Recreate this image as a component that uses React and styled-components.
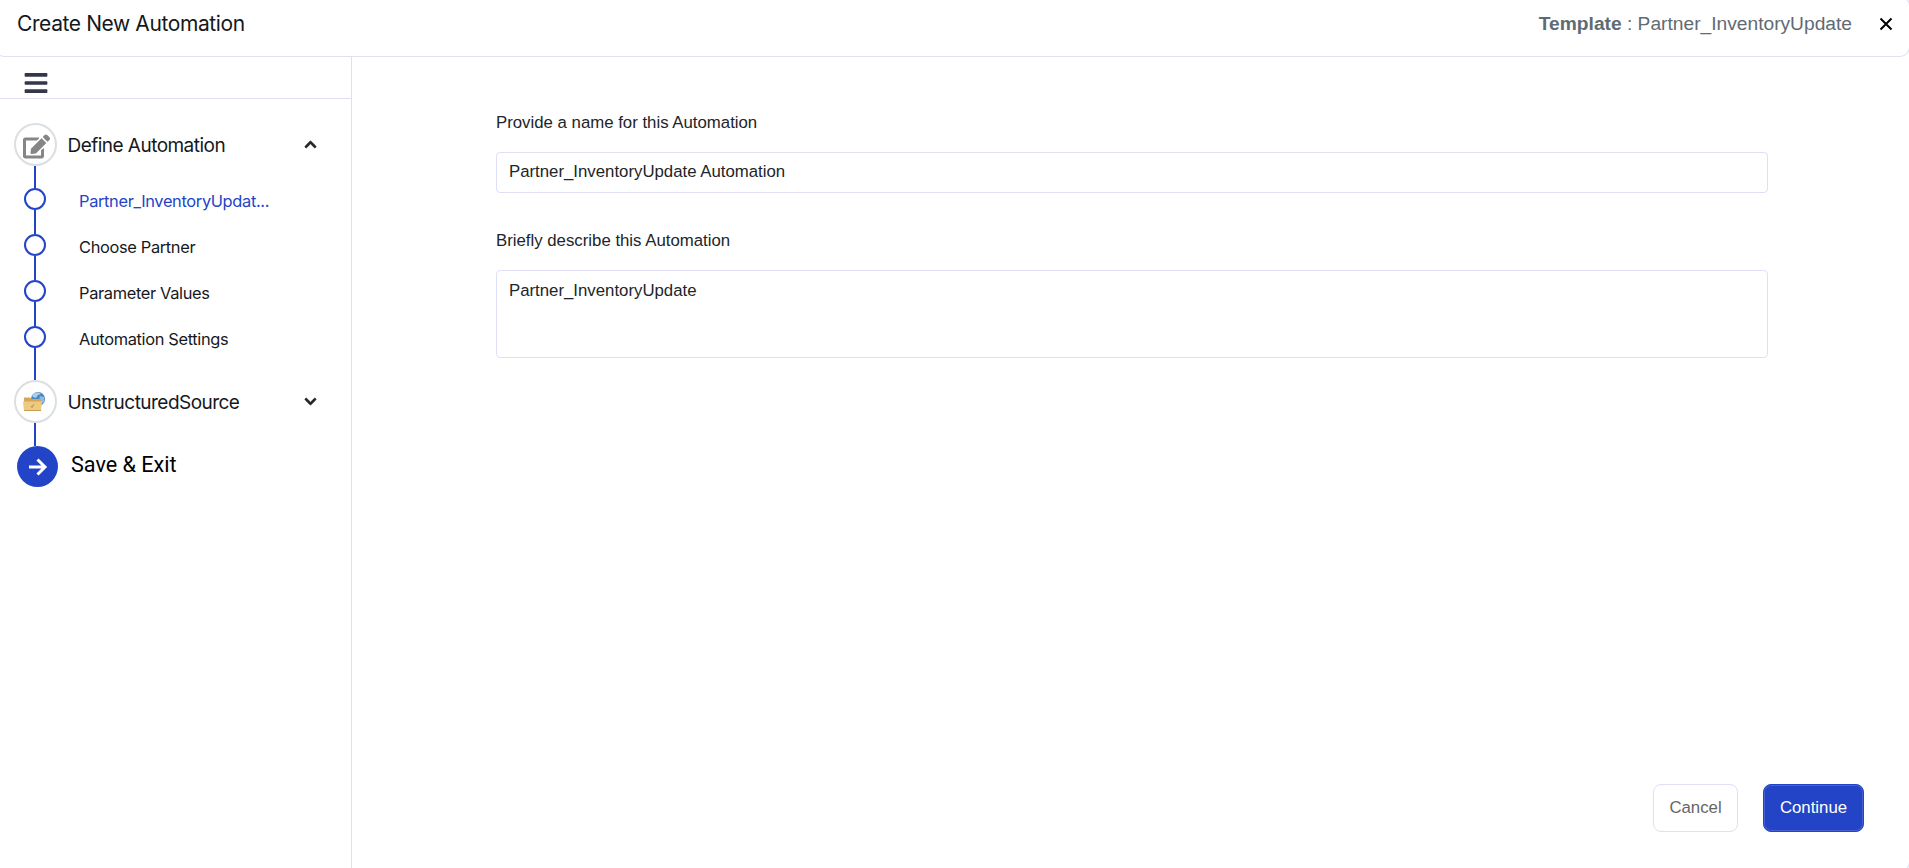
import { useState } from 'react'
import styled, { createGlobalStyle, css } from 'styled-components'
import {
    FaBars,
    FaEdit,
    FaChevronUp,
    FaChevronDown,
} from 'react-icons/fa'

const GlobalStyle = createGlobalStyle`
    *, *::before, *::after {
        box-sizing: border-box;
    }
    body {
        margin: 0;
        background: #fff;
        color: #212529;
        font-family: 'Liberation Sans', Arial, sans-serif;
        font-size: 16.8px;
        overflow: hidden;
    }
`

const Page = styled.div`
    display: flex;
    flex-direction: column;
    height: 868px;
    overflow: hidden;
`

const Header = styled.header`
    display: flex;
    flex: none;
    align-items: center;
    justify-content: space-between;
    height: 61px;
    margin: -4px -1px 0 -5px;
    padding: 4px 15px 9px 22px;
    border: 1px solid #dfdff6;
    border-left: 0;
    border-radius: 10px;
`

const Title = styled.h1`
    margin: 0;
    font-family: Inter, sans-serif;
    font-size: 21px;
    font-weight: 400;
    letter-spacing: -0.4px;
    line-height: 26px;
    color: #16181d;
`

const HeaderRight = styled.div`
    display: flex;
    align-items: center;
    gap: 26px;
`

const TemplateName = styled.div`
    font-size: 19.2px;
    line-height: 24px;
    color: #5f6b73;
`

const CloseButton = styled.button`
    display: flex;
    padding: 0;
    border: 0;
    background: none;
    color: #000;
    cursor: pointer;
`

const Body = styled.div`
    display: flex;
    flex: 1;
    margin: 0 -1px -4px 0;
    border: solid #dfdff6;
    border-width: 0 1px 1px 0;
    border-radius: 0 0 10px 0;
`

const Sidebar = styled.aside`
    width: 352px;
    border-right: 1px solid #dfdff6;
`

const MenuBar = styled.div`
    display: flex;
    height: 42px;
    padding: 12.5px 0 0 22.5px;
    border-bottom: 1px solid #dfdff6;
    color: #35364b;
`

const Steps = styled.div`
    display: flex;
    flex-direction: column;
    padding: 24px 34px 0 14px;
`

const StepHead = styled.div`
    display: flex;
    align-items: center;
    height: 43px;
    cursor: pointer;
`

const StepIcon = styled.span`
    display: flex;
    flex: none;
    align-items: center;
    justify-content: center;
    width: 43px;
    height: 43px;
    padding: ${({ $shift }) => $shift || '0'};
    border: 2px solid #dadfe3;
    border-radius: 50%;
    color: #868686;
`

const StepTitle = styled.span`
    flex: 1;
    margin-left: 10.5px;
    padding-top: 2px;
    font-family: Inter, sans-serif;
    font-size: 19px;
    letter-spacing: -0.53px;
    color: #16181d;
`

const Chevron = styled.span`
    display: flex;
    color: #212529;

    path {
        stroke: currentColor;
        stroke-width: 36px;
    }
`

const Line = styled.span`
    flex: none;
    width: 2px;
    height: ${({ $height }) => $height}px;
    margin-left: 20px;
    background: #2444c8;
`

const SubStep = styled.div`
    display: flex;
    height: 46px;
`

const Track = styled.span`
    display: flex;
    flex-direction: column;
    width: 65px;
`

const Dot = styled.span`
    flex: none;
    width: 22px;
    height: 22px;
    margin-left: 10px;
    border: 2px solid #2444c8;
    border-radius: 50%;
`

const SubTitle = styled.span`
    padding-top: 3px;
    font-family: Inter, sans-serif;
    font-size: 16.4px;
    letter-spacing: -0.34px;
    line-height: 20px;
    color: ${({ $active }) => ($active ? '#2444c8' : '#16181d')};
`

const SaveRow = styled.div`
    display: flex;
    align-items: center;
    padding-left: 3px;
    font-family: Roboto, sans-serif;
    font-size: 21.6px;
    color: #000;
`

const SaveIcon = styled.span`
    display: flex;
    align-items: center;
    justify-content: center;
    width: 41px;
    height: 41px;
    margin-right: 13px;
    border-radius: 50%;
    background: #2444c8;
`

const SaveText = styled.span`
    padding-bottom: 4px;
`

const Content = styled.main`
    display: flex;
    flex: 1;
    flex-direction: column;
    padding: 56px 45px 39px 144px;
`

const Field = styled.label`
    display: flex;
    flex-direction: column;
    margin-right: 96px;
    line-height: 20px;
`

const fieldStyles = css`
    margin: 19px 0 38px;
    border: 1px solid #dfdff6;
    border-radius: 4px;
    outline: none;
    background: #fff;
    color: #212529;
    font-family: inherit;
    font-size: 16.8px;
    line-height: 20px;
    resize: none;
`

const Input = styled.input`
    ${fieldStyles}
    height: 41px;
    padding: 0 12px 2px;
`

const TextArea = styled.textarea`
    ${fieldStyles}
    height: 88px;
    padding: 10px 12px;
`

const Footer = styled.footer`
    display: flex;
    justify-content: flex-end;
    gap: 25px;
    margin-top: auto;
`

const Button = styled.button`
    width: ${({ $primary }) => ($primary ? 101 : 85)}px;
    height: 48px;
    padding: 0;
    border: 1px solid ${({ $primary }) => ($primary ? '#2444c8' : '#dfdff6')};
    border-radius: 8px;
    background: ${({ $primary }) => ($primary ? '#2444c8' : '#fff')};
    box-shadow: ${({ $primary }) =>
        $primary ? 'inset 0 0 0 1px #4560d0' : 'none'};
    color: ${({ $primary }) => ($primary ? '#fff' : '#666')};
    font-family: inherit;
    font-size: 16.8px;
    cursor: pointer;
`

function FolderIcon() {
    return (
        <svg width="24" height="22" viewBox="0 0 24 22">
            <circle cx="15" cy="8" r="7" fill="#4b86bd" />
            <path d="M9 4c2-3 7-3.500 9-1l-3 1-2 3-3-1z" fill="#a9cdea" />
            <path d="M17 5l4 1v5l-3 2-2-4z" fill="#8bbce2" />
            <path
                d="M1 6.500h6l1.500 1.500H18v11H1z"
                fill="#d7a654"
            />
            <path d="M0 10.500h19l-1 9.500H1z" fill="#edca82" />
            <path d="M1 19.500h17" stroke="#c99b4c" />
            <path
                d="M8 15l1 1.500 2-3.500"
                fill="none"
                stroke="#a98238"
                strokeWidth="0.8"
            />
        </svg>
    )
}

const subSteps = [
    'Partner_InventoryUpdat...',
    'Choose Partner',
    'Parameter Values',
    'Automation Settings',
]

function App() {
    const [name, setName] = useState('Partner_InventoryUpdate Automation')
    const [description, setDescription] = useState('Partner_InventoryUpdate')
    const [active, setActive] = useState(0)
    return (
        <>
            <GlobalStyle />
            <Page>
                <Header>
                    <Title>Create New Automation</Title>
                    <HeaderRight>
                        <TemplateName>
                            <b>Template</b> : Partner_InventoryUpdate
                        </TemplateName>
                        <CloseButton aria-label="Close">
                            <svg width="16" height="16" viewBox="0 0 16 16">
                                <path
                                    d="M2.500 2.500l11 11M13.500 2.500l-11 11"
                                    stroke="currentColor"
                                    strokeWidth="2"
                                />
                            </svg>
                        </CloseButton>
                    </HeaderRight>
                </Header>
                <Body>
                    <Sidebar>
                        <MenuBar>
                            <FaBars size={26} />
                        </MenuBar>
                        <Steps>
                            <StepHead>
                                <StepIcon $shift="4px 0 0 2px">
                                    <FaEdit size={27} />
                                </StepIcon>
                                <StepTitle>Define Automation</StepTitle>
                                <Chevron>
                                    <FaChevronUp size={13} />
                                </Chevron>
                            </StepHead>
                            <Line $height={22} />
                            {subSteps.map((step, index) => (
                                <SubStep
                                    key={step}
                                    onClick={() => setActive(index)}
                                >
                                    <Track>
                                        <Dot />
                                        <Line $height={24} />
                                    </Track>
                                    <SubTitle $active={index === active}>
                                        {step}
                                    </SubTitle>
                                </SubStep>
                            ))}
                            <Line $height={8} />
                            <StepHead>
                                <StepIcon $shift="0 2px 0 0">
                                    <FolderIcon />
                                </StepIcon>
                                <StepTitle>UnstructuredSource</StepTitle>
                                <Chevron>
                                    <FaChevronDown size={13} />
                                </Chevron>
                            </StepHead>
                            <Line $height={23} />
                            <SaveRow>
                                <SaveIcon>
                                    <svg width="20" height="20" viewBox="0 0 20 20">
                                        <path
                                            d="M1 10H17M9.500 2.500L17 10 9.500 17.500"
                                            fill="none"
                                            stroke="#fff"
                                            strokeWidth="3"
                                        />
                                    </svg>
                                </SaveIcon>
                                <SaveText>Save &amp; Exit</SaveText>
                            </SaveRow>
                        </Steps>
                    </Sidebar>
                    <Content>
                        <Field>
                            Provide a name for this Automation
                            <Input
                                value={name}
                                onChange={e => setName(e.target.value)}
                            />
                        </Field>
                        <Field>
                            Briefly describe this Automation
                            <TextArea
                                value={description}
                                onChange={e => setDescription(e.target.value)}
                            />
                        </Field>
                        <Footer>
                            <Button>Cancel</Button>
                            <Button $primary>Continue</Button>
                        </Footer>
                    </Content>
                </Body>
            </Page>
        </>
    )
}

export default App
